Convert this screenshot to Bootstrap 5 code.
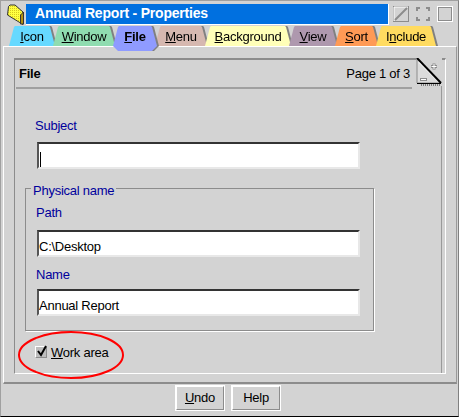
<!DOCTYPE html>
<html lang="en"><head><meta charset="utf-8"><title>Annual Report - Properties</title>
<link rel="stylesheet" href="https://cdn.jsdelivr.net/npm/bootstrap@5.3.0/dist/css/bootstrap.min.css">
<style>
html,body{margin:0;background:#d3d3d3;}
body{font-family:"Liberation Sans",Arial,sans-serif;font-size:13px;line-height:15px;letter-spacing:-.25px;color:#000;}
.win{position:relative;width:459px;height:417px;overflow:hidden;background:#d3d3d3;border-top:1px solid #a0a0a0;border-left:1px solid #a0a0a0;border-bottom:1px solid #000;border-right:1px solid #808080;}
.ttl{height:25px;padding:3px 5px 0 5px;}
.ticon{width:19px;height:21px;margin-right:1px;flex:none;}
.tbar{width:363px;height:21px;background:#0070e0;color:#fff;font-weight:700;font-size:14px;letter-spacing:-.2px;line-height:18px;padding-left:9px;border-right:1px solid #fff;border-bottom:1px solid #fff;white-space:nowrap;}
.wb{width:16px;height:16px;margin-top:2px;flex:none;}
.wb1{margin-left:4px;}.wb2{margin-left:6px;}.wb3{margin-left:6px;}
.tabs{height:20px;padding-left:8px;position:relative;z-index:2;}
.tabw{filter:drop-shadow(2px 0 0 #808080);height:20px;margin-right:-2px;flex:none;}
.tabi{height:20px;padding-top:3px;text-align:center;clip-path:polygon(0 100%,5px 1px,6px 0,calc(100% - 6px) 0,calc(100% - 5px) 1px,100% 100%);white-space:nowrap;}
.on{z-index:3;height:25px;}
.on .tabi{height:25px;font-weight:700;clip-path:polygon(0 20px,5px 1px,6px 0,calc(100% - 6px) 0,calc(100% - 5px) 1px,100% 20px,calc(100% - 5px) 100%,5px 100%);}
.t1{width:46px;background:#66d9ff}.t2{width:62px;background:#8fdcb0}.t3{width:44px;background:#8f9bff}.t4{width:52px;background:#d6b8b0}.t5{width:86px;background:#ffffb8}.t6{width:48px;background:#ae98ae}.t7{width:43px;background:#ff9a55}.t8{width:60px;background:#ffdb60}
.panel{margin-left:2px;height:338px;width:454px;background:#d3d3d3;border-top:1px solid #fff;border-left:1px solid #fff;border-right:1px solid #9a9a9a;border-bottom:2px solid #8c8c8c;padding:11px 0 0 10px;position:relative;z-index:1;}
.page{width:432px;height:316px;border-top:2px solid #8c8c8c;border-left:1px solid #8c8c8c;border-right:1px solid #fff;border-bottom:1px solid #fff;padding-right:3px;position:relative;}
.hdr{height:29px;padding:6px 0 0 3px;margin-right:29px;margin-left:1px;border-bottom:2px solid #a0a0a0;}
.pgn{margin-right:2px;}
.ear{position:absolute;right:3px;top:-2px;width:26px;height:28px;background:#d3d3d3;}
.pin2{height:313px;border-right:1px solid #9a9a9a;}
.lb{color:#00009c;}
.l1{padding:29px 0 0 20px;height:53px;}
.fld.form-control{display:block;height:27px;width:323px;padding:6px 1px 0 0;border-radius:0;border:0;border-top:2px solid #333;border-left:2px solid #555;border-bottom:2px solid #e8e8e8;border-right:2px solid #e8e8e8;background:#fff;font:13px/15px "Liberation Sans",Arial,sans-serif;letter-spacing:-.25px;color:#000;box-shadow:none;}
.f1{margin-left:22px;padding-top:0 !important;}
.caret{height:15px;width:1px;background:#000;margin-top:8px;margin-left:1px;display:block;}
.gbox{margin:19px 0 0 10px;width:349px;height:143px;border:1px solid #8c8c8c;box-shadow:1px 1px 0 #fff;position:relative;padding:14px 0 0 10px;}
.leg{position:absolute;left:5px;top:-8px;padding:0 2px;background:#d3d3d3;}
.gbox .lb{height:25px;margin-top:2px;}
.gbox .fld{margin-left:1px;}
.gbox .lb2{padding-top:10px;margin-top:0;height:32px;}
.chk{margin:11px 0 0 20px;height:20px;}
.form-check-input.cb{width:12px;height:12px;margin:0;border-radius:0;float:none;background:#bdbdbd none;border:1px solid;border-color:#fff #8c8c8c #8c8c8c #fff;box-shadow:none;opacity:1;}
.cbox{position:relative;width:12px;height:12px;margin-right:4px;flex:none;}
.cbox svg{position:absolute;left:0;top:-1px;}
.cbox .cb{position:absolute;left:0;top:0;}
.circ{position:absolute;left:16px;top:329px;width:108px;height:50px;z-index:5;}
.foot{height:30px;padding:1px 3px 0 0;gap:6px;}
.fb.btn{width:50px;height:26px;padding:0;font:13px/22px "Liberation Sans",Arial,sans-serif;letter-spacing:-.25px;color:#000;background:#d3d3d3;border-radius:0;border:2px solid;border-color:#fff #8c8c8c #8c8c8c #fff;outline:1px solid #fff;outline-offset:-1px;box-shadow:none;}
</style></head><body>
<div class="win d-flex flex-column">
 <div class="ttl d-flex">
  <svg class="ticon" viewBox="0 0 19 21"><defs><pattern id="ck" width="2" height="2" patternUnits="userSpaceOnUse"><rect width="2" height="2" fill="#ffff40"/><rect width="1" height="1" fill="#d8c820"/></pattern></defs><path d="M1.500 11 2.500 2.500 4 1h5l8 7v12.500z" fill="url(#ck)" stroke="#333"/><path d="M17.500 8v12l-3 0V11z" fill="#b09010" stroke="#333"/></svg>
  <div class="tbar">Annual Report - Properties</div>
  <svg class="wb wb1" viewBox="0 0 16 16"><rect x=".5" y=".5" width="15" height="15" fill="none" stroke="#8c8c8c"/><path d="M1 1h14M1 1v14" stroke="#fff" fill="none"/><path d="M2 14 14 2" stroke="#8c8c8c" stroke-width="2"/></svg>
  <svg class="wb wb2" viewBox="0 0 16 16"><path d="M2 5V2h3M11 2h3v3M14 11v3h-3M5 14H2v-3" fill="none" stroke="#8c8c8c" stroke-width="2"/></svg>
  <svg class="wb wb3" viewBox="0 0 16 16"><rect x=".5" y=".5" width="15" height="15" fill="none" stroke="#fff"/><rect x="1.500" y="1.500" width="13" height="13" fill="none" stroke="#8c8c8c"/></svg>
 </div>
 <div class="tabs d-flex">
  <div class="tabw"><div class="tabi t1"><u>I</u>con</div></div>
  <div class="tabw"><div class="tabi t2"><u>W</u>indow</div></div>
  <div class="tabw on"><div class="tabi t3"><u>F</u>ile</div></div>
  <div class="tabw"><div class="tabi t4"><u>M</u>enu</div></div>
  <div class="tabw"><div class="tabi t5"><u>B</u>ackground</div></div>
  <div class="tabw"><div class="tabi t6"><u>V</u>iew</div></div>
  <div class="tabw"><div class="tabi t7"><u>S</u>ort</div></div>
  <div class="tabw"><div class="tabi t8">I<u>n</u>clude</div></div>
 </div>
 <div class="panel">
  <div class="page">
   <div class="pin2">
    <div class="hdr d-flex justify-content-between"><b>File</b><span class="pgn">Page 1 of 3</span></div>
    <div class="lb l1">Subject</div>
    <div class="form-control fld f1"><span class="caret"></span></div>
    <div class="gbox">
     <div class="leg lb">Physical name</div>
     <div class="lb">Path</div>
     <input class="form-control fld" value="C:\Desktop" aria-label="Path">
     <div class="lb lb2">Name</div>
     <input class="form-control fld" value="Annual Report" aria-label="Name">
    </div>
    <label class="chk d-flex align-items-center">
     <span class="cbox"><input type="checkbox" class="form-check-input cb" checked disabled><svg width="13" height="13" viewBox="0 0 13 13"><path d="M3 6l3 4 5-9" fill="none" stroke="#000" stroke-width="2"/></svg></span>
     <span><u>W</u>ork area</span>
    </label>
   </div>
   <svg class="ear" viewBox="0 0 26 28"><path d="M1 0 25 25H1z" fill="#dcdcdc" stroke="#8c8c8c"/><path d="M3 3.500 22 22.500" stroke="#fff" stroke-width="2"/><path d="M1 0 25 25" stroke="#000" stroke-width="2"/><path d="M4 21.500h7" stroke="#8c8c8c" stroke-width="3"/><path d="M5 21.500h5" stroke="#fff"/><path d="M15 8.500h6M18 5.500v6" stroke="#8c8c8c" stroke-width="3"/><path d="M15.500 8.500h5M18 6v5" stroke="#fff"/><path d="M5 27h20" stroke="#222" stroke-dasharray="1 1"/><path d="M1 25.500h24" stroke="#000"/></svg>
  </div>
 </div>
 <div class="foot d-flex justify-content-center">
  <button class="btn fb"><u>U</u>ndo</button>
  <button class="btn fb">Help</button>
 </div>
 <svg class="circ" viewBox="0 0 108 50"><ellipse cx="54" cy="25" rx="52" ry="23" fill="none" stroke="#f00" stroke-width="2"/></svg>
</div>
<script src="https://cdn.jsdelivr.net/npm/bootstrap@5.3.0/dist/js/bootstrap.bundle.min.js"></script>
</body></html>
